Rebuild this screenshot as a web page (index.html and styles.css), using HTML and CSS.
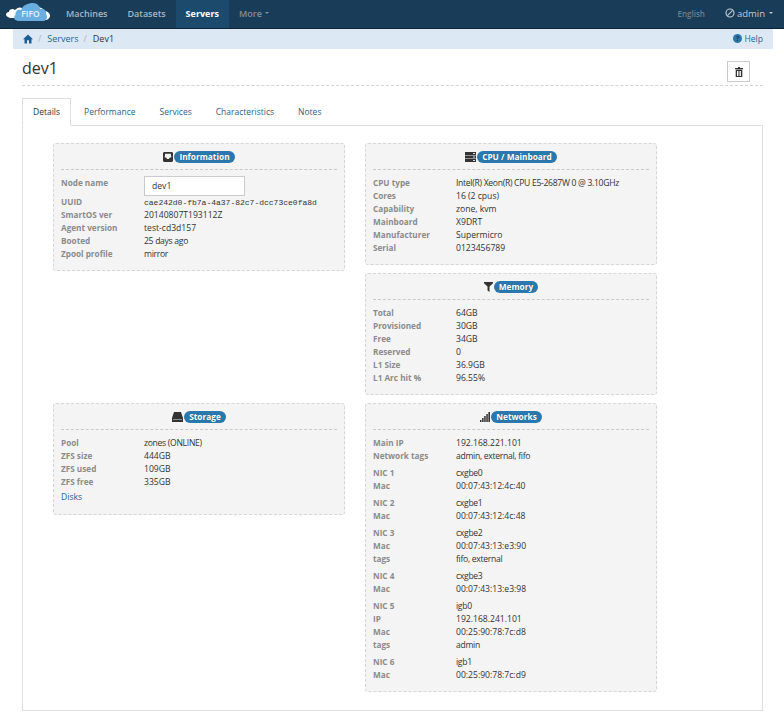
FILE: index.html
```html
<!DOCTYPE html>
<html lang="en">
<head>
<meta charset="utf-8">
<title>dev1</title>
<link rel="stylesheet" href="styles.css">
</head>
<body>
<nav class="navbar">
  <svg class="logo" viewBox="0 0 44 18" width="44" height="18"><path fill="#fff" d="M3 9 C3 6 7 5 9 7 C12 4 14 4 16 5 L16 15 L6 15 C2 15 0 13 0 11.5 C0 10 1.5 9 3 9Z"/><path fill="#fff" d="M30 4 C35 4 38 6 38 8 C41 8 44 10 44 12.5 C44 15 42 17 39 17 L30 17Z"/><path fill="#6aaee0" d="M13 18 C8 18 7 14 9.500 12 C9 8 12 6 15 7 C17 2 22 0 27 0 C31 0 34 3 34 6 C38 5 41 8 40 11 C42 13 41 18 37 18Z"/><text x="24.500" y="14" class="logo-text" text-anchor="middle">FIFO</text></svg>
  <a class="nav-link">Machines</a>
  <a class="nav-link">Datasets</a>
  <a class="nav-link active">Servers</a>
  <a class="nav-link more">More <span class="caret"></span></a>
  <div class="nav-right">
    <span class="lang">English</span>
    <span class="user"><svg class="ban" viewBox="0 0 10 10" width="10" height="10"><circle cx="5" cy="5" r="4" fill="none" stroke="#c6ced5" stroke-width="1.1"/><path d="M2.400 7.600L7.600 2.400" stroke="#c6ced5" stroke-width="1.1"/></svg> admin <span class="caret"></span></span>
  </div>
</nav>
<div class="crumbs">
  <svg viewBox="0 0 10 10" width="10" height="10"><path fill="#1d5f93" d="M5 .5L10 5.200H8.500V9.500H6V6.300H4V9.500H1.500V5.200H0Z"/></svg>
  <span class="sep">/</span><a class="crumb-link">Servers</a><span class="sep">/</span><span class="crumb-cur">Dev1</span>
  <a class="help"><svg viewBox="0 0 10 10" width="9" height="9"><circle cx="5" cy="5" r="5" fill="#2a77ad"/><text x="5" y="7.600" class="q" text-anchor="middle">?</text></svg> Help</a>
</div>
<main class="page">
  <header class="page-head">
    <h1>dev1</h1>
    <button class="del" type="button"><svg viewBox="0 0 8 10" width="8" height="10"><path fill="#333" fill-rule="evenodd" d="M3 0H5V1H8V2.200H0V1H3ZM.7 2.800H7.300V10H.7ZM2 4V9H3V4ZM3.600 4V9H4.500V4ZM5.100 4V9H6V4Z"/></svg></button>
  </header>
  <div class="tabs">
    <a class="tab active">Details</a>
    <a class="tab">Performance</a>
    <a class="tab">Services</a>
    <a class="tab">Characteristics</a>
    <a class="tab">Notes</a>
  </div>
  <section class="tab-body">
    <div class="grid">
      <div class="col">
        <article class="panel">
          <h2 class="panel-title"><svg viewBox="0 0 10 10" width="10" height="10"><path fill="#333" fill-rule="evenodd" d="M1.500 0H8.500C9.500 0 10 .7 10 1.500V8.500C10 9.400 9.400 10 8.500 10H1.500C.6 10 0 9.400 0 8.500V1.500C0 .7.5 0 1.500 0ZM2.200 1.800L1.600 5.500H3.300L4 7H6L6.700 5.500H8.400L7.800 1.800Z"/></svg><span class="badge">Information</span></h2>
          <dl class="facts">
            <div class="fact name-row"><dt>Node name</dt><dd><input class="name-input" value="dev1"></dd></div>
            <div class="fact"><dt>UUID</dt><dd class="mono">cae242d0-fb7a-4a37-82c7-dcc73ce0fa8d</dd></div>
            <div class="fact"><dt>SmartOS ver</dt><dd>20140807T193112Z</dd></div>
            <div class="fact"><dt>Agent version</dt><dd>test-cd3d157</dd></div>
            <div class="fact"><dt>Booted</dt><dd class="tight">25 days ago</dd></div>
            <div class="fact"><dt>Zpool profile</dt><dd class="tight">mirror</dd></div>
          </dl>
        </article>
      </div>
      <div class="col">
        <article class="panel">
          <h2 class="panel-title"><svg viewBox="0 0 11 10" width="11" height="10"><path fill="#333" d="M0 0H11V3H0ZM0 3.500H11V6.500H0ZM0 7H11V10H0Z"/><path fill="#ddd" d="M8 1H10V2H8ZM8 4.500H10V5.500H8ZM8 8H10V9H8Z"/></svg><span class="badge">CPU / Mainboard</span></h2>
          <dl class="facts">
            <div class="fact"><dt>CPU type</dt><dd class="tight">Intel(R) Xeon(R) CPU E5-2687W 0 @ 3.10GHz</dd></div>
            <div class="fact"><dt>Cores</dt><dd>16 (2 cpus)</dd></div>
            <div class="fact"><dt>Capability</dt><dd>zone, kvm</dd></div>
            <div class="fact"><dt>Mainboard</dt><dd>X9DRT</dd></div>
            <div class="fact"><dt>Manufacturer</dt><dd>Supermicro</dd></div>
            <div class="fact"><dt>Serial</dt><dd>0123456789</dd></div>
          </dl>
        </article>
        <article class="panel">
          <h2 class="panel-title"><svg viewBox="0 0 9 10" width="9" height="10"><path fill="#333" d="M0 0H9V1.300L5.500 4.500V10L3.500 8.500V4.500L0 1.300Z"/></svg><span class="badge">Memory</span></h2>
          <dl class="facts">
            <div class="fact"><dt>Total</dt><dd>64GB</dd></div>
            <div class="fact"><dt>Provisioned</dt><dd>30GB</dd></div>
            <div class="fact"><dt>Free</dt><dd>34GB</dd></div>
            <div class="fact"><dt>Reserved</dt><dd>0</dd></div>
            <div class="fact"><dt>L1 Size</dt><dd>36.9GB</dd></div>
            <div class="fact"><dt>L1 Arc hit %</dt><dd>96.55%</dd></div>
          </dl>
        </article>
      </div>
      <div class="col">
        <article class="panel">
          <h2 class="panel-title"><svg viewBox="0 0 11 10" width="11" height="10"><path fill="#333" d="M2 0H9L11 6V10H0V6Z"/><path fill="#ccc" d="M1 7H10V7.600H1Z"/></svg><span class="badge">Storage</span></h2>
          <dl class="facts">
            <div class="fact"><dt>Pool</dt><dd class="tight">zones (ONLINE)</dd></div>
            <div class="fact"><dt>ZFS size</dt><dd>444GB</dd></div>
            <div class="fact"><dt>ZFS used</dt><dd>109GB</dd></div>
            <div class="fact"><dt>ZFS free</dt><dd>335GB</dd></div>
          </dl>
          <a class="disks">Disks</a>
        </article>
      </div>
      <div class="col">
        <article class="panel">
          <h2 class="panel-title"><svg viewBox="0 0 10 10" width="10" height="10"><path fill="#333" d="M0 8H1.500V10H0ZM2.100 6H3.600V10H2.100ZM4.200 4H5.700V10H4.200ZM6.300 2H7.800V10H6.300ZM8.400 0H10V10H8.400Z"/></svg><span class="badge">Networks</span></h2>
          <dl class="facts">
            <div class="fact"><dt>Main IP</dt><dd>192.168.221.101</dd></div>
            <div class="fact"><dt>Network tags</dt><dd class="tight">admin, external, fifo</dd></div>
          </dl>
          <dl class="facts nic">
            <div class="fact"><dt>NIC 1</dt><dd class="tight">cxgbe0</dd></div>
            <div class="fact"><dt>Mac</dt><dd>00:07:43:12:4c:40</dd></div>
          </dl>
          <dl class="facts nic">
            <div class="fact"><dt>NIC 2</dt><dd class="tight">cxgbe1</dd></div>
            <div class="fact"><dt>Mac</dt><dd>00:07:43:12:4c:48</dd></div>
          </dl>
          <dl class="facts nic">
            <div class="fact"><dt>NIC 3</dt><dd class="tight">cxgbe2</dd></div>
            <div class="fact"><dt>Mac</dt><dd>00:07:43:13:e3:90</dd></div>
            <div class="fact"><dt>tags</dt><dd class="tight">fifo, external</dd></div>
          </dl>
          <dl class="facts nic">
            <div class="fact"><dt>NIC 4</dt><dd class="tight">cxgbe3</dd></div>
            <div class="fact"><dt>Mac</dt><dd>00:07:43:13:e3:98</dd></div>
          </dl>
          <dl class="facts nic">
            <div class="fact"><dt>NIC 5</dt><dd class="tight">igb0</dd></div>
            <div class="fact"><dt>IP</dt><dd>192.168.241.101</dd></div>
            <div class="fact"><dt>Mac</dt><dd>00:25:90:78:7c:d8</dd></div>
            <div class="fact"><dt>tags</dt><dd class="tight">admin</dd></div>
          </dl>
          <dl class="facts nic">
            <div class="fact"><dt>NIC 6</dt><dd class="tight">igb1</dd></div>
            <div class="fact"><dt>Mac</dt><dd>00:25:90:78:7c:d9</dd></div>
          </dl>
        </article>
      </div>
    </div>
  </section>
</main>
</body>
</html>
```
FILE: styles.css
```css
* { box-sizing: border-box; }
html, body { margin: 0; padding: 0; }
body { font-family: "Open Sans", sans-serif; font-size: 8.6px; color: #333; background: #fff; width: 784px; height: 726px; overflow: hidden; }
.navbar { height: 29px; background: #193c58; border-bottom: 1px solid #0d2232; display: flex; align-items: stretch; padding-left: 6px; font-size: 9px; font-weight: 600; color: #a9b6c0; }
.logo { margin-top: 3px; margin-right: 6px; flex: none; }
.logo-text { font-family: "Open Sans", sans-serif; font-size: 8.500px; fill: #e4f0fa; }
.nav-link { display: flex; align-items: center; padding: 0 10px 2px; }
.nav-link.active { background: #1c4a6d; color: #fff; font-weight: 700; }
.nav-link.more { color: #7f8f9c; gap: 3px; }
.caret { display: inline-block; width: 0; height: 0; border-left: 2.500px solid transparent; border-right: 2.500px solid transparent; border-top: 2.500px solid currentColor; }
.nav-right { margin-left: auto; display: flex; align-items: center; padding: 0 11px 2px 0; gap: 20px; }
.lang { color: #6d7f8d; font-size: 8px; }
.user { color: #c0c9d0; font-weight: 400; display: flex; align-items: center; gap: 2px; font-size: 9.500px; }
.user .caret { margin-left: 2px; }
.crumbs { height: 20px; margin: 0 11px 0 13px; background: #dce9f4; display: flex; align-items: center; padding: 0 10px 1px 10px; color: #333; font-size: 9px; }
.crumb-link { color: #2a6496; }
.sep { color: #aab5be; margin: 0 6px 0 5px; }
.crumb-cur { color: #333; }
.help { margin-left: auto; color: #2a6496; display: flex; align-items: center; gap: 2px; font-size: 8.600px; }
.q { font-family: "Open Sans", sans-serif; font-size: 7.500px; font-weight: 700; fill: #1b3c57; }
.page { margin: 0 21px 0 22px; }
.page-head { height: 37px; border-bottom: 1px dashed #d4d4d4; display: flex; justify-content: space-between; align-items: flex-start; }
h1 { margin: 9px 0 0; font-size: 16px; line-height: 20px; font-weight: 400; color: #333; }
.del { margin: 12px 13px 0 0; width: 23px; height: 21px; background: #fff; border: 1px solid #ccc; padding: 0; display: flex; align-items: center; justify-content: center; }
.tabs { display: flex; margin-top: 12px; height: 28px; position: relative; z-index: 1; gap: 2px; font-size: 8.500px; }
.tab { padding: 0 10px; height: 27px; line-height: 26px; color: #2e5f85; border: 1px solid transparent; }
.tab.active { height: 28px; color: #333; background: #fff; border-color: #ddd #ddd #fff; }
.tab-body { border: 1px solid #ddd; height: 586px; margin-top: -1px; padding: 17px 30px 0; }
.grid { display: grid; grid-template-columns: 292px 292px; column-gap: 20px; row-gap: 8px; }
.col { display: flex; flex-direction: column; gap: 8px; }
.panel { background: #f4f4f4; border: 1px dashed #d6d6d6; border-radius: 3px; padding: 6px 7px 10px; }
.panel-title { margin: 0 0 6px; padding-bottom: 5px; border-bottom: 1px dashed #c9c9c9; height: 20px; display: flex; align-items: center; justify-content: center; gap: 1px; font-size: 8.300px; }
.badge { background: #2a78ad; color: #fff; font-weight: 700; border-radius: 6px; height: 12px; line-height: 12px; padding: 0 5px; text-shadow: 0 0 1px rgba(0,0,0,.3); }
.facts { margin: 0; }
.fact { display: flex; align-items: baseline; height: 13px; line-height: 13px; }
dt { width: 83px; flex: none; font-weight: 700; font-size: 8.200px; color: #8b8b8b; }
dd { margin: 0; color: #333; white-space: nowrap; }
.tight { letter-spacing: -.3px; }
.mono { font-family: "Liberation Mono", monospace; font-size: 8px; }
.name-row { height: 19px; align-items: flex-start; }
.name-row dd { height: 19px; }
.name-input { display: block; width: 101px; height: 20px; border: 1px solid #ccc; background: #fff; padding: 0 7px; font-family: "Open Sans", sans-serif; font-size: 8.600px; color: #333; border-radius: 0; }
.nic { margin-top: 4px; }
.disks { display: block; margin-top: 3px; color: #2a6496; line-height: 13px; }
```
